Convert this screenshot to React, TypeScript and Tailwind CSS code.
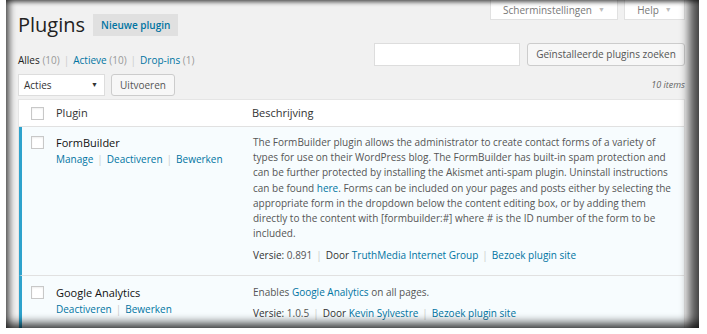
import React from 'react';

const link = 'text-[#0074a2]';

function Checkbox() {
  return <span className="block w-[13px] h-[13px] border border-[#c8c8c8] bg-white shadow-[inset_0_1px_2px_rgba(0,0,0,0.07)]" />;
}

function Sep() {
  return <span className="text-[#ccc] mx-[4px]">|</span>;
}

export default function App() {
  return (
    <div className="w-[707px] h-[334px] bg-white overflow-hidden font-['Open_Sans',sans-serif]">
      <div className="relative ml-[6px] w-[693px] h-[328px] bg-[#f1f1f1] overflow-hidden">
        {/* screen options tabs */}
        <div className="absolute top-[-6px] right-[14px] flex gap-[6px] text-[10px] text-[#777]">
          <div className="h-[26px] w-[128px] pt-[6px] bg-white border border-[#e1e1e1] flex items-center justify-center gap-[6px]">
            Scherminstellingen <span className="text-[7px] text-[#bbb]">▼</span>
          </div>
          <div className="h-[26px] w-[61px] pt-[6px] bg-white border border-[#e1e1e1] flex items-center justify-center gap-[6px]">
            Help <span className="text-[7px] text-[#bbb]">▼</span>
          </div>
        </div>

        <div className="pl-[12px] pr-[14px]">
          {/* title */}
          <div className="flex items-center gap-[8px] pt-[13px] h-[37px]">
            <h2 className="text-[20px] leading-[24px] text-[#222]">Plugins</h2>
            <span className="h-[22px] px-[8px] flex items-center bg-[#e0e0e0] text-[10px] font-semibold text-[#0074a2]">
              Nieuwe plugin
            </span>
          </div>

          {/* filters + search */}
          <div className="flex justify-between items-start mt-[6px]">
            <div className="pt-[10px] text-[10px] leading-[14px] text-[#666]">
              <span className="text-[#222]">Alles</span> <span className="text-[#999]">(10)</span>
              <Sep />
              <span className={link}>Actieve</span> <span className="text-[#999]">(10)</span>
              <Sep />
              <span className={link}>Drop-ins</span> <span className="text-[#999]">(1)</span>
            </div>
            <div className="flex gap-[7px]">
              <div className="w-[146px] h-[23px] bg-white border border-[#ddd]" />
              <div className="w-[158px] h-[23px] bg-[#f7f7f7] border border-[#ccc] rounded-[3px] flex items-center justify-center text-[10px] text-[#555]">
                Geïnstalleerde plugins zoeken
              </div>
            </div>
          </div>

          {/* bulk actions */}
          <div className="flex items-center mt-[7px] gap-[6px] h-[22px]">
            <div className="w-[87px] h-[22px] bg-white border border-[#ddd] flex items-center justify-between pl-[5px] pr-[6px] text-[10px] text-[#333]">
              Acties <span className="text-[7px] text-[#333]">▼</span>
            </div>
            <div className="w-[64px] h-[22px] bg-[#f7f7f7] border border-[#ccc] rounded-[3px] flex items-center justify-center text-[10px] text-[#555]">
              Uitvoeren
            </div>
            <span className="ml-auto text-[9px] italic text-[#666]">10 items</span>
          </div>

          {/* table */}
          <div className="mt-[3px] bg-white border border-[#e5e5e5] text-[10px] leading-[15.2px] text-[#555]">
            <div className="flex items-center h-[27px] border-b border-[#e1e1e1] text-[11px] text-[#333]">
              <div className="w-[37px] pl-[12px]"><Checkbox /></div>
              <div className="w-[196px]">Plugin</div>
              <div className="flex-1">Beschrijving</div>
            </div>

            <div className="flex bg-[#f7fcfe] border-l-[3px] border-[#2ea2cc] border-b border-b-[#e1e1e1] pt-[8px] pb-[11px]">
              <div className="w-[34px] pl-[9px] pt-[1px]"><Checkbox /></div>
              <div className="w-[197px]">
                <div className="text-[11px] text-[#111] leading-[16px]">FormBuilder</div>
                <div className="mt-[1px] text-[10px]">
                  <span className={link}>Manage</span><Sep /><span className={link}>Deactiveren</span><Sep /><span className={link}>Bewerken</span>
                </div>
              </div>
              <div className="flex-1 pr-[8px]">
                <p>
                  The FormBuilder plugin allows the administrator to create contact forms of a variety of types for use on their WordPress blog. The FormBuilder has built-in spam protection and can be further protected by installing the Akismet anti-spam plugin. Uninstall instructions can be found <a className={link}>here</a>. Forms can be included on your pages and posts either by selecting the appropriate form in the dropdown below the content editing box, or by adding them directly to the content with [formbuilder:#] where # is the ID number of the form to be included.
                </p>
                <p className="mt-[7px]">
                  <span className="text-[#333]">Versie:</span> 0.891<Sep /><span className="text-[#333]">Door</span> <span className={link}>TruthMedia Internet Group</span><Sep /><span className={link}>Bezoek plugin site</span>
                </p>
              </div>
            </div>

            <div className="flex bg-[#f7fcfe] border-l-[3px] border-[#2ea2cc] pt-[9px] pb-[20px]">
              <div className="w-[34px] pl-[9px] pt-[1px]"><Checkbox /></div>
              <div className="w-[197px]">
                <div className="text-[11px] text-[#111] leading-[16px]">Google Analytics</div>
                <div className="mt-[1px] text-[10px]">
                  <span className={link}>Deactiveren</span><Sep /><span className={link}>Bewerken</span>
                </div>
              </div>
              <div className="flex-1 pr-[8px]">
                <p>Enables <span className={link}>Google Analytics</span> on all pages.</p>
                <p className="mt-[6px]">
                  <span className="text-[#333]">Versie:</span> 1.0.5<Sep /><span className="text-[#333]">Door</span> <span className={link}>Kevin Sylvestre</span><Sep /><span className={link}>Bezoek plugin site</span>
                </p>
              </div>
            </div>
          </div>
        </div>

        {/* photo frame shadow */}
        <div className="pointer-events-none absolute inset-0 shadow-[inset_6px_0_6px_-2px_rgba(0,0,0,0.55),inset_0_4px_4px_-2px_rgba(0,0,0,0.5),inset_-14px_0_10px_-4px_rgba(0,0,0,0.65),inset_0_-10px_8px_-4px_rgba(0,0,0,0.6)]" />
      </div>
    </div>
  );
}
